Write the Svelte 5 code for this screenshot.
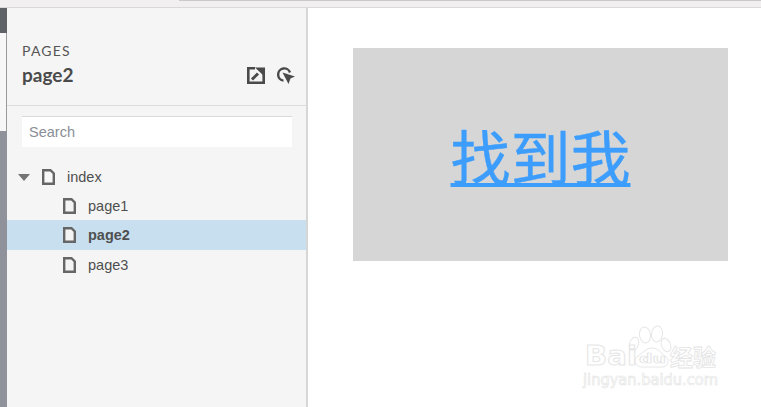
<script>
  const pages = [
    { name: 'page1' },
    { name: 'page2', active: true },
    { name: 'page3' }
  ];
</script>

<div class="shell">
  <div class="topbar"><div class="topbar-tab"></div></div>
  <div class="body">
    <div class="rail">
      <div class="rail-dark"></div>
      <div class="rail-light"></div>
      <div class="rail-gray"></div>
    </div>
    <aside class="sidebar">
      <header class="head">
        <div class="label">PAGES</div>
        <div class="title-row">
          <div class="title">page2</div>
          <div class="tools">
            <svg class="tool" width="18" height="17" viewBox="0 0 18 17">
              <path d="M16.7 5V15.7H1.3V1.3H8" fill="none" stroke="#4a4a4a" stroke-width="2.6" />
              <path d="M5 12.5L11 6.5" stroke="#4a4a4a" stroke-width="3" />
              <path d="M8 0.5H18V10Z" fill="#4a4a4a" />
            </svg>
            <svg class="tool" width="18" height="17" viewBox="0 0 18 17">
              <path d="M6.5 13.6A6.1 6.1 0 1 1 13 5.5" fill="none" stroke="#4a4a4a" stroke-width="2.4" />
              <path d="M5.5 5.5L18 9.5L13.5 11.5L11.5 17Z" fill="#4a4a4a" />
            </svg>
          </div>
        </div>
      </header>
      <div class="search-wrap">
        <input class="search" placeholder="Search" />
      </div>
      <div class="tree">
        <div class="row root">
          <svg class="caret" width="12" height="7" viewBox="0 0 12 7"><path d="M0 0H12L6 7Z" fill="#747474" /></svg>
          <svg class="file" width="13" height="16" viewBox="0 0 13 16"><path d="M1.2 1.2H8.5L11.8 4.5V14.8H1.2Z" fill="#f8f8f8" stroke="#666" stroke-width="2.4" /></svg>
          <span>index</span>
        </div>
        {#each pages as p}
          <div class="row child" class:active={p.active}>
            <svg class="file" width="13" height="16" viewBox="0 0 13 16"><path d="M1.2 1.2H8.5L11.8 4.5V14.8H1.2Z" fill="#f4f4f4" stroke="#666" stroke-width="2.4" /></svg>
            <span>{p.name}</span>
          </div>
        {/each}
      </div>
    </aside>
    <main class="canvas">
      <div class="box"><a href="#top" class="link">找到我</a></div>
      <div class="mark">
        <svg width="191" height="97" viewBox="0 0 191 97">
          <g fill="#fff" stroke="#e6e6e6" stroke-width="1">
            <ellipse cx="75" cy="25" rx="5.5" ry="8" transform="rotate(-8 75 25)" />
            <ellipse cx="87" cy="24" rx="5.5" ry="8" transform="rotate(8 87 24)" />
            <ellipse cx="96" cy="35" rx="4.5" ry="7" transform="rotate(-22 96 35)" />
            <ellipse cx="64" cy="34" rx="4.5" ry="7" transform="rotate(18 64 34)" />
            <path d="M82 38C88 38 91 43 95 46C101 50 98 58 90 57H73C66 58 62 50 68 46C73 43 76 38 82 38Z" />
          </g>
          <text x="15" y="55" textLength="52" lengthAdjust="spacingAndGlyphs" class="mk-big">Bai</text>
          <text x="69" y="53" textLength="27" lengthAdjust="spacingAndGlyphs" class="mk-du">du</text>
          <text x="100" y="56" class="mk-cn">经验</text>
          <text x="13" y="75" textLength="135" lengthAdjust="spacingAndGlyphs" class="mk-url">jingyan.baidu.com</text>
        </svg>
      </div>
    </main>
  </div>
</div>

<style>
  :global(body) { margin: 0; background: #fff; }
  .shell {
    width: 761px;
    height: 407px;
    overflow: hidden;
    display: flex;
    flex-direction: column;
    font-family: "Liberation Sans", Arial, sans-serif;
  }
  .topbar {
    height: 7px;
    flex: none;
    background: #f1efef;
    border-bottom: 1px solid #d9d9d9;
    position: relative;
  }
  .topbar-tab {
    position: absolute;
    left: 179px;
    right: 0;
    top: 0;
    height: 1px;
    background: #c9c9c9;
  }
  .body { flex: 1; display: flex; min-height: 0; }
  .rail { width: 7px; flex: none; display: flex; flex-direction: column; }
  .rail-dark { height: 25px; background: #5f6266; }
  .rail-light { height: 98px; background: #f7f7f7; border-right: 1px solid #9a9a9a; box-sizing: border-box; }
  .rail-gray { flex: 1; background: #8f929a; }
  .sidebar {
    width: 299px;
    flex: none;
    background: #f5f5f5;
    border-right: 2px solid #a6a6a6;
    border-image: linear-gradient(to right, #949494 50%, #d6d6d6 50%) 1;
    display: flex;
    flex-direction: column;
  }
  .head {
    height: 98px;
    box-sizing: border-box;
    padding: 35px 11px 0 15px;
    border-bottom: 1px solid #dcdcdc;
  }
  .label {
    font-family: Lato, sans-serif;
    font-size: 14px;
    line-height: 16px;
    letter-spacing: 1.2px;
    color: #555;
  }
  .title-row { display: flex; justify-content: space-between; align-items: center; margin-top: 4px; }
  .title {
    font-family: Lato, sans-serif;
    font-weight: 700;
    font-size: 19px;
    line-height: 24px;
    color: #4a4a4a;
  }
  .tools { display: flex; gap: 12px; align-items: center; margin-left: -1px; }
  .tool { display: block; }
  .search-wrap { padding: 10px 14px 0 15px; }
  .search {
    display: block;
    width: 100%;
    height: 31px;
    box-sizing: border-box;
    border: 0;
    border-top: 1px solid #d9d9d9;
    background: #fff;
    padding: 0 7px;
    font-family: "Liberation Sans", Arial, sans-serif;
    font-size: 14.5px;
    outline: none;
  }
  .search::placeholder { color: #8a8e98; opacity: 1; }
  .tree { margin-top: 13px; }
  .row {
    height: 30px;
    box-sizing: border-box;
    display: flex;
    align-items: center;
    font-size: 14.5px;
    color: #4f4f4f;
  }
  .root { padding-left: 11px; padding-top: 4px; }
  .caret { margin-right: 12px; }
  .root .file { margin-right: 12px; }
  .child { padding-left: 56px; }
  .child:nth-child(2) { padding-top: 2px; }
  .child .file { margin-right: 12px; }
  .active { background: #c8dfef; font-weight: 700; }
  .canvas { flex: 1; position: relative; background: #fff; padding: 40px 0 0 45px; }
  .box {
    width: 375px;
    height: 213px;
    background: #d6d6d6;
    display: flex;
    align-items: center;
    justify-content: center;
  }
  .link {
    font-family: "Noto Sans CJK SC", sans-serif;
    font-size: 60px;
    line-height: 70px;
    color: #3c9dfc;
    text-decoration: underline;
    text-decoration-thickness: 4px;
    -webkit-text-stroke: 0.4px #3c9dfc;
  }
  .mark { position: absolute; left: 262px; top: 302px; }
  .mark svg { display: block; }
  .mk-big { font: 700 27px "DejaVu Sans", sans-serif; fill: #fff; stroke: #e6e6e6; stroke-width: 1; }
  .mk-du { font: 700 13px "DejaVu Sans", sans-serif; fill: #fff; stroke: #e2e2e2; stroke-width: 0.7; }
  .mk-cn { font: 700 23px "Noto Sans CJK SC", sans-serif; fill: #fff; stroke: #e4e4e4; stroke-width: 0.8; }
  .mk-url { font: 400 15px "DejaVu Sans", sans-serif; fill: #fff; stroke: #e6e6e6; stroke-width: 0.7; }
</style>
